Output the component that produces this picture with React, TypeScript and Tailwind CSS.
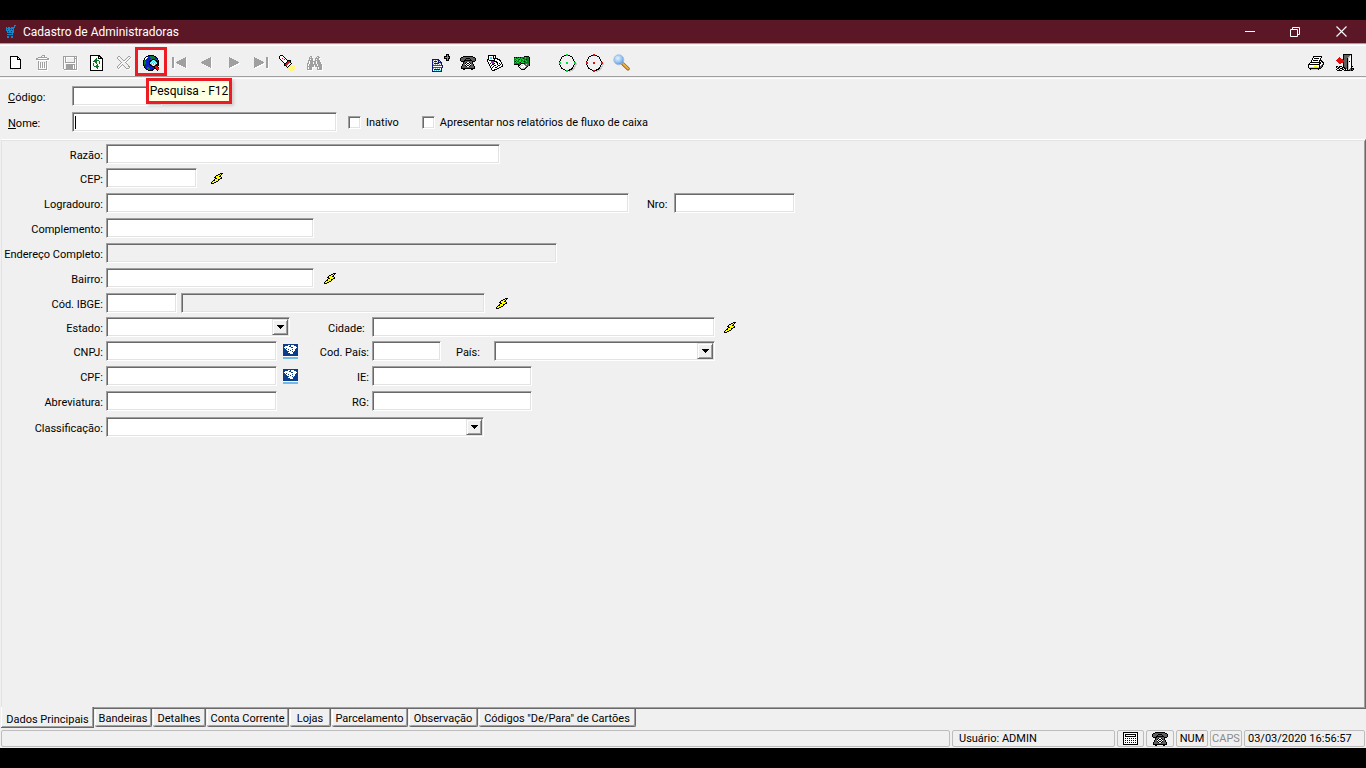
import React from "react";

const PALETTE: Record<string, string> = {
  k: "#000000",
  w: "#ffffff",
  g: "#a0a0a0",
  d: "#5f5f5f",
  l: "#c8c8c8",
  G: "#0a7a1e",
  L: "#00e030",
  B: "#0a1fc8",
  C: "#35d6e6",
  R: "#e01010",
  Y: "#ffff00",
  y: "#fff27a",
  P: "#a020c0",
  N: "#10186e",
  n: "#0a3d8c",
  s: "#6fbbe6",
  c: "#1786c6",
};

/* Draws a small bitmap-style icon, one character per pixel. */
function Pix({ rows, shadow = false }: { rows: string[]; shadow?: boolean }) {
  const width = Math.max(...rows.map((r) => r.length));
  const cells: React.ReactElement[] = [];
  rows.forEach((row, y) => {
    let x = 0;
    while (x < row.length) {
      const ch = row[x];
      let end = x + 1;
      while (end < row.length && row[end] === ch) end++;
      if (PALETTE[ch]) {
        cells.push(<rect key={`${x}-${y}`} x={x} y={y} width={end - x} height={1} fill={PALETTE[ch]} />);
      }
      x = end;
    }
  });
  return (
    <svg
      width={width}
      height={rows.length}
      viewBox={`0 0 ${width} ${rows.length}`}
      shapeRendering="crispEdges"
      aria-hidden="true"
      className={shadow ? "shrink-0 drop-shadow-[1px_1px_0_#ffffff]" : "shrink-0"}
    >
      {cells}
    </svg>
  );
}

const NEW_DOC = [
  "kkkkkkkk...",
  "kwwwwwwkk..",
  "kwwwwwwkwk.",
  "kwwwwwwkkkk",
  "kwwwwwwwwwk",
  "kwwwwwwwwwk",
  "kwwwwwwwwwk",
  "kwwwwwwwwwk",
  "kwwwwwwwwwk",
  "kwwwwwwwwwk",
  "kwwwwwwwwwk",
  "kwwwwwwwwwk",
  "kkkkkkkkkkk",
];
const TRASH = [
  "......ggg....",
  ".....g..g....",
  "..ggggggggg..",
  "gg.........gg",
  "ggggggggggggg",
  ".............",
  "..g.......g..",
  "..g.g.g.g.g..",
  "..g.g.g.g.g..",
  "..g.g.g.g.g..",
  "..g.g.g.g.g..",
  "..g.g.g.g.g..",
  "..g.g.g.g.g..",
  "..g.......g..",
  "..ggggggggg..",
];
const SAVE = [
  "gggggggggggggg",
  "g.g........g.g",
  "g.g........ggg",
  "g.g........g.g",
  "g.g........g.g",
  "g.g........g.g",
  "g.gggggggggg.g",
  "g............g",
  "g..ggggggggg.g",
  "g..ggggggg.g.g",
  "g..ggggggg.g.g",
  "g..ggggggg.g.g",
  "g..ggggggg.g.g",
  ".ggggggggggggg",
];
const REFRESH = [
  "kkkkkkkkkk...",
  "kwwwwwwwkkk..",
  "kwwwwwwwkwkk.",
  "kwwwwwGwkkkkk",
  "kwwwwGGwwwwwk",
  "kwwwGGGGGwwwk",
  "kwwGGGGwwGwwk",
  "kwwwwGGwwGwwk",
  "kwwGwwGwwGwwk",
  "kwwGwwwGwwwwk",
  "kwwGwwGGwwwwk",
  "kwwwGGGGGwwwk",
  "kwwwwwGGwwwwk",
  "kwwwwwwGwwwwk",
  "kwwwwwwwwwwwk",
  "kkkkkkkkkkkkk",
];
const CROSS = [
  ".gg........gg.",
  "g..g......g..g",
  "g...g....g..g.",
  ".g...g..g..g..",
  "..g...gg..g...",
  "...g.....g....",
  "....g...g.....",
  "...g.....g....",
  "..g..g....g...",
  ".g..g.g....g..",
  "g..g...g...gg.",
  "g.g.....g...g.",
  ".g.......ggg..",
];
const GLOBE = [
  ".....kkkkkk.....",
  "...kkBBGGGGkk...",
  "..kwwBBGGGGGBk..",
  ".kwwBBBBGGGGBBk.",
  ".kwBBBBGGkkkGGk.",
  "kGBBBBBkkCwCkkGk",
  "kGGBBBkkCwCwCkkk",
  "kGGBBBkCwCwCwCkk",
  "kGGBBBkwCwCwCwkk",
  "kGBBBBkkCwCwCkkk",
  "kBBBBBBkkCwCkkBk",
  ".kBBBBBBBkkkRRk.",
  ".kBBGGBBBBBkRRRk",
  "..kBGGGBBBBkkRRR",
  "...kkGGBBkk..kRR",
  ".....kkkkk....k.",
];
const FIRST = [
  "gg...........g",
  "gg.........ggg",
  "gg.......ggggg",
  "gg.....ggggggg",
  "gg...ggggggggg",
  "gg..gggggggggg",
  "gg...ggggggggg",
  "gg.....ggggggg",
  "gg.......ggggg",
  "gg.........ggg",
  "gg...........g",
];
const PREV = [
  ".........g",
  ".......ggg",
  ".....ggggg",
  "...ggggggg",
  ".ggggggggg",
  "gggggggggg",
  ".ggggggggg",
  "...ggggggg",
  ".....ggggg",
  ".......ggg",
  ".........g",
];
const mirror = (rows: string[]) => rows.map((r) => r.split("").reverse().join(""));
const TORCH = [
  ".kkk.............",
  "kwwwk............",
  "kwwwwk...........",
  "kwwRwwk..........",
  ".kwwwRwk.........",
  "..kwwwwwkkkk.....",
  "...kwwwwkRRk.....",
  "....kwwkRRdk.....",
  ".....kkRRdwwk....",
  ".....kRRdwwk.....",
  ".....kkdwwk.y.y..",
  ".......kwk.y.y.y.",
  "........k.y.y.y..",
  ".........y.y.y.y.",
  "..........y.y.y..",
  "...........y.y...",
];
const BINOCULARS = [
  "...gg.....gg...",
  "..g.g....g.gg..",
  "..gggg..gggg...",
  "..g.gg..g.gg...",
  ".ggggg..ggggg..",
  ".g.gggggg.ggg..",
  ".g.ggg.gg.gggg.",
  "gg.ggg.gg.gggg.",
  "g.gggggggg.gggg",
  "g.ggggg.gg.gggg",
  "ggggggg.ggggggg",
  "g.ggg.....g.ggg",
  "g.ggg.....g.ggg",
  "ggggg.....ggggg",
];
const DOC_PLUS = [
  "..............kkk.",
  "..............kLk.",
  "............kkkLkk",
  "............kLLLLk",
  "............kkkLkk",
  "NNNNNNN.......kLk.",
  "NCwCwCNN......kkk.",
  "NwNNNwNCN.........",
  "NCwCwCNNNN........",
  "NwNNNNNwCN........",
  "NCwCwCwCwN........",
  "NRRRRRRRRRN.......",
  "NwwwwwwwwwN.......",
  "NRRRRRRRRRN.......",
  "NCwCwCwCwN........",
  "NwNNNNNNwN........",
  "NwCwCwCwCN........",
  "NNNNNNNNNN........",
];
const PHONE = [
  "...kkkkkkkkkk...",
  ".kkddddddddddkk.",
  "kdddddkkkkdddddk",
  "kddddkddddkddddk",
  "kdddkkkkkkkkdddk",
  ".kkkkdddddddkkk.",
  "...kddkwwkddk...",
  "...kdkwkkwkdk...",
  "..kddwkwwkwddk..",
  "..kddkwkkwkddk..",
  ".kddddkwwkddddk.",
  ".kddddddddddddk.",
  ".kkkkkkkkkkkkkk.",
  "...kk......kk...",
];
const PAPERS = [
  ".kkkkkkkk.......",
  ".kwwwwkwk.......",
  ".kwCCwkwk.......",
  ".kwCCwkkkkk.....",
  "kkwwwwwkwwkkk...",
  "kwkkkkkkwwwwkk..",
  "kwwwPPPkkkwwwk..",
  ".kwwPPPwwkkwwwk.",
  ".kwkwPPkwwkwkwk.",
  "..kwwkkwwwkwwkwk",
  "..kwkwwkkwwkkwwk",
  "...kwwkwwwkwwwkk",
  "...kwkwwkkwwkk..",
  "....kwwwwwkk....",
  "....kwwkkk......",
  ".....kkk........",
];
const MONEY = [
  "..........kkkkk.",
  "kGkGkGkGGGGLGGGk",
  "GLGGLLGLGkGLGGGk",
  "GGLLGkLGLLGGkGGk",
  "GLGLGLLGGLGLGGGk",
  "GkLGGLLGLGkGLGGk",
  "GLGLLGkLLLGGGGGk",
  "GGGGGGGkkkkdddGk",
  "kkkkkGkwwwddlddk",
  "....kkwllwwddddk",
  "....kwlwwwwwdk..",
  ".....klwwlwdk...",
  "......kllldk....",
  ".......kkkk.....",
];
const target = (c: string) =>
  [
    ".......TT.........",
    ".....kkTTkk.......",
    "...kk......kk.....",
    "..k..........k....",
    "..k..........k....",
    ".k............k...",
    ".k............k...",
    "k..............k..",
    "TT.....TT......TT.",
    "TT.....TT......TTl",
    "k..............kll",
    ".k............k.l.",
    ".k............kll.",
    "..k..........kll..",
    "..kk........kkll..",
    "....kk....kkkll...",
    "......kTTkklll....",
    ".......TT.ll......",
  ].map((r) => r.replace(/T/g, c));
const PRINTER = [
  ".....kkkkkkkkk..",
  ".....kwwwwwwwk..",
  "....kwkkkkkwk...",
  "....kwwwwwwwk...",
  "...kwkkkkkwkkk..",
  "...kwwwwwwwkwkk.",
  "..kkkkkkkkkkkwkk",
  ".kwwwwwwwwwkkwwk",
  "kkkkkkkkkkkkwwdk",
  "kwwwwwwwwwwkwdk.",
  "kwwwwwYYYwwkddk.",
  "kllllllllllkdk..",
  ".kkkkkkkkkkkk...",
  "..klllllllk.....",
];
const EXIT_DOOR = [
  ".......kkkkkkkkk..",
  ".......kddddddlk..",
  ".......kdddddlwk..",
  "...R...kddddllwk..",
  "..RRR..kdddklwwk..",
  ".RRRRRRkdddklwwk..",
  "RRRRRRRRdddklwwk..",
  ".RRRRRRRdddklkwk..",
  "..RRRRRkdddklwwk..",
  "...RR..kdddklwwk..",
  ".......kdddklwwk..",
  ".......kdddklwwk..",
  "kk.kkk.kdddklwwkk.",
  "k.kk..kkkddklwwk..",
  ".kk.kkk.kkdklwdkkk",
  "k..k..kk.k.klddkdk",
  ".kkkkk..kkkkkkdkk.",
];
const BOLT = [
  ".........kkk",
  ".......kkYk.",
  ".....kkYYk..",
  "....kYYYkk..",
  "...kkYYYYYk.",
  "....kkYYYkk.",
  "...kYYYkk...",
  "..kkYYYk....",
  ".kYYYkk.....",
  "kYYkk.......",
  "kkk.........",
];
const RECEITA = [
  "nnnnnnnnnnnnnnn",
  "nnnnnwwnwwwnnnn",
  "nnwwwwnnwwwwwnn",
  "nwwwwwwwnnwwwwn",
  "nnwnwwwwwwwwwnn",
  "nnnwwnwwwnwwnnn",
  "nnnnwwwnwwwwnnn",
  "nnnnnnwwwnwnnnn",
  "nnnnnwwwwwnnnnn",
  "nnnnnnnwwwnnnnn",
  "nnnnnnnnnnnnnnn",
  "nnnnnnnnnnnnnnn",
  "wwwwwwwwwwwwwww",
  "sssssssssssssss",
  "sssssssssssssss",
];
const CALCULATOR = [
  "kkkkkkkkkkkkkkk",
  "kwwwwwwwwwwwwwk",
  "kwkkkkkkkkkkkwk",
  "kwkwwwwwwwwwkwk",
  "kwkkkkkkkkkkkwk",
  "kwwwwwwwwwwwwwk",
  "kwkwkwkwkwkwkwk",
  "kwwwwwwwwwwwwwk",
  "kwkwkwkwkwkwkwk",
  "kwwwwwwwwwwwwwk",
  "kwkwkwkwkwkwkwk",
  "kwwwwwwwwwwwwwk",
  "kkkkkkkkkkkkkkk",
];
const CART = [
  "........cc",
  "........c.",
  "c.cc.cccc.",
  "cccccccc..",
  "c.cc.c.c..",
  "cccccccc..",
  ".c.cc.cc..",
  ".ccccccc..",
  "......c...",
  ".cccccc...",
  "..........",
  ".cc..cc...",
  ".cc..cc...",
];

function Magnifier() {
  return (
    <svg width="17" height="17" viewBox="0 0 17 17" aria-hidden="true">
      <defs>
        <radialGradient id="lens" cx="0.4" cy="0.35" r="0.7">
          <stop offset="0" stopColor="#e6f3ff" />
          <stop offset="0.6" stopColor="#8fc1f2" />
          <stop offset="1" stopColor="#4f86cf" />
        </radialGradient>
      </defs>
      <path d="M9.5 9.5 L15 14.8" stroke="#8a5a1a" strokeWidth="3.4" strokeLinecap="round" />
      <path d="M10.3 10 L15 14.6" stroke="#f0b040" strokeWidth="2" strokeLinecap="round" />
      <circle cx="5.8" cy="5.8" r="5" fill="url(#lens)" stroke="#a9bfdd" strokeWidth="1" />
    </svg>
  );
}

function ToolButton({
  label,
  children,
  disabled = false,
}: {
  label: string;
  children: React.ReactNode;
  disabled?: boolean;
}) {
  return (
    <button
      type="button"
      aria-label={label}
      disabled={disabled}
      className="relative flex h-[29px] w-[27px] shrink-0 items-center justify-center pt-0.5"
    >
      {children}
    </button>
  );
}

const SUNKEN =
  "block h-5 shrink-0 rounded-none border border-t-[#a0a0a0] border-l-[#a0a0a0] border-r-white border-b-white px-1 outline-none shadow-[inset_1px_1px_0_#696969,inset_-1px_-1px_0_#e3e3e3]";

function Field({ id, width, readOnly = false }: { id: string; width: string; readOnly?: boolean }) {
  return (
    <input
      id={id}
      type="text"
      readOnly={readOnly}
      className={`${SUNKEN} ${width} ${readOnly ? "bg-[#f0f0f0]" : "bg-white"}`}
    />
  );
}

function Combo({ id, width }: { id: string; width: string }) {
  return (
    <div className={`relative shrink-0 ${width}`}>
      <select id={id} className={`${SUNKEN} w-full appearance-none bg-white`}>
        <option value=""></option>
      </select>
      <span className="pointer-events-none absolute top-0.5 right-0.5 flex h-4 w-4 items-center justify-center border border-t-[#e3e3e3] border-l-[#e3e3e3] border-r-[#696969] border-b-[#696969] bg-[#f0f0f0] shadow-[inset_1px_1px_0_#ffffff,inset_-1px_-1px_0_#a0a0a0]">
        <Pix rows={["kkkkkkk", ".kkkkk.", "..kkk..", "...k..."]} />
      </span>
    </div>
  );
}

function Label({
  id,
  children,
  className = "w-[104px] pr-[3px] text-right",
}: {
  id: string;
  children: React.ReactNode;
  className?: string;
}) {
  return (
    <label htmlFor={id} className={`shrink-0 pt-0.5 whitespace-nowrap ${className}`}>
      {children}
    </label>
  );
}

function Bolt({ label, className }: { label: string; className: string }) {
  return (
    <button type="button" aria-label={label} className={`shrink-0 ${className}`}>
      <Pix rows={BOLT} />
    </button>
  );
}

function Row({ children }: { children: React.ReactNode }) {
  return <div className="flex h-5 items-center">{children}</div>;
}

function Check({ id, children }: { id: string; children: React.ReactNode }) {
  return (
    <div className="flex items-center gap-[5px]">
      <input
        id={id}
        type="checkbox"
        className="h-[13px] w-[13px] appearance-none border border-t-[#a0a0a0] border-l-[#a0a0a0] border-r-white border-b-white bg-white shadow-[inset_1px_1px_0_#696969,inset_-1px_-1px_0_#e3e3e3]"
      />
      <label htmlFor={id}>{children}</label>
    </div>
  );
}

const TABS: { name: string; width: string }[] = [
  { name: "Bandeiras", width: "w-[57px]" },
  { name: "Detalhes", width: "w-[53px]" },
  { name: "Conta Corrente", width: "w-[82px]" },
  { name: "Lojas", width: "w-[41px]" },
  { name: "Parcelamento", width: "w-[76px]" },
  { name: "Observação", width: "w-[69px]" },
  { name: 'Códigos "De/Para" de Cartões', width: "w-[157px]" },
];

const CELL = "flex h-[17px] items-center rounded-xs border border-[#bdbdbd] whitespace-nowrap";

export default function App() {
  return (
    <div className="flex min-h-screen flex-col bg-black py-5">
      <div className="flex flex-1 flex-col bg-[#f0f0f0] font-['Roboto','Liberation_Sans',sans-serif] text-[11px] leading-[13px] text-black">
        <header className="flex h-[23px] items-center bg-[#5c1727] pr-0.5 pl-[6px] text-white">
          <Pix rows={CART} />
          <h1 className="ml-[7px] flex-1 text-[12px] leading-4">Cadastro de Administradoras</h1>
          <button type="button" aria-label="Minimizar" className="flex h-full w-[45px] items-center justify-center">
            <svg width="10" height="10" viewBox="0 0 10 10" shapeRendering="crispEdges" aria-hidden="true">
              <rect x="0" y="4" width="10" height="1" fill="#fff" />
            </svg>
          </button>
          <button type="button" aria-label="Restaurar" className="flex h-full w-[46px] items-center justify-center">
            <svg width="10" height="10" viewBox="0 0 10 10" fill="none" stroke="#fff" aria-hidden="true">
              <path d="M0.5 2.5h7v7h-7z M2.5 2.5v-2h7v7h-2" />
            </svg>
          </button>
          <button type="button" aria-label="Fechar" className="flex h-full w-[46px] items-center justify-center">
            <svg width="11" height="11" viewBox="0 0 11 11" stroke="#fff" strokeWidth="1.1" aria-hidden="true">
              <path d="M0.5 0.5l10 10M10.5 0.5l-10 10" />
            </svg>
          </button>
        </header>

        <div className="border-y border-[#a0a0a0] pt-px">
          <div role="toolbar" className="flex border-t border-white pt-px pr-2 pl-0.5">
            <div className="flex gap-px">
              <div className="flex">
                <ToolButton label="Novo"><Pix rows={NEW_DOC} /></ToolButton>
                <ToolButton label="Excluir" disabled><Pix rows={TRASH} shadow /></ToolButton>
                <ToolButton label="Salvar" disabled><Pix rows={SAVE} shadow /></ToolButton>
                <ToolButton label="Atualizar"><Pix rows={REFRESH} /></ToolButton>
                <ToolButton label="Cancelar" disabled><Pix rows={CROSS} shadow /></ToolButton>
                <ToolButton label="Pesquisa">
                  <Pix rows={GLOBE} />
                  <span className="absolute top-0 -left-0.5 h-[29px] w-8 border-3 border-[#ed1c24]" />
                  <span
                    role="tooltip"
                    className="absolute top-[31px] left-[9px] z-10 flex h-[26px] w-[86px] items-center justify-center border-3 border-[#ed1c24] bg-[#ffffe1] text-[12px] leading-4 whitespace-nowrap shadow-[2px_2px_3px_rgba(0,0,0,0.15)]"
                  >
                    Pesquisa - F12
                  </span>
                </ToolButton>
              </div>
              <div className="flex">
                <ToolButton label="Primeiro" disabled><Pix rows={FIRST} shadow /></ToolButton>
                <ToolButton label="Anterior" disabled><Pix rows={PREV} shadow /></ToolButton>
              </div>
              <div className="flex">
                <ToolButton label="Próximo" disabled><Pix rows={mirror(PREV)} shadow /></ToolButton>
                <ToolButton label="Último" disabled><Pix rows={mirror(FIRST)} shadow /></ToolButton>
                <ToolButton label="Localizar"><Pix rows={TORCH} /></ToolButton>
                <ToolButton label="Consultar" disabled><Pix rows={BINOCULARS} shadow /></ToolButton>
              </div>
            </div>
            <div className="ml-[99px] flex">
              <ToolButton label="Adicionar documento"><Pix rows={DOC_PLUS} /></ToolButton>
              <ToolButton label="Telefones"><Pix rows={PHONE} /></ToolButton>
              <ToolButton label="Documentos"><Pix rows={PAPERS} /></ToolButton>
              <ToolButton label="Financeiro"><Pix rows={MONEY} /></ToolButton>
            </div>
            <div className="ml-[19px] flex flex-1">
              <ToolButton label="Ativar"><Pix rows={target("L")} /></ToolButton>
              <ToolButton label="Desativar"><Pix rows={target("R")} /></ToolButton>
              <ToolButton label="Visualizar"><Magnifier /></ToolButton>
            </div>
            <div className="flex gap-0.5">
              <ToolButton label="Imprimir"><Pix rows={PRINTER} /></ToolButton>
              <ToolButton label="Sair"><Pix rows={EXIT_DOOR} /></ToolButton>
            </div>
          </div>
        </div>

        <section className="mt-px flex flex-col gap-1.5 border-t border-white pt-[7px] pb-[7px] pl-2">
          <Row>
            <Label id="codigo" className="w-16"><u>C</u>ódigo:</Label>
            <Field id="codigo" width="w-[90px]" />
          </Row>
          <Row>
            <Label id="nome" className="w-16"><u>N</u>ome:</Label>
            <div className="relative">
              <Field id="nome" width="w-[265px]" />
              <span className="absolute top-1 left-[3px] h-[13px] w-px bg-black" />
            </div>
            <div className="ml-[11px] flex gap-[23px]">
              <Check id="inativo">Inativo</Check>
              <Check id="fluxo">Apresentar nos relatórios de fluxo de caixa</Check>
            </div>
          </Row>
        </section>

        <main className="ml-px flex flex-1 flex-col border-t border-r border-b border-t-white border-r-[#696969] border-b-[#696969] shadow-[inset_1px_1px_0_#e3e3e3,inset_-1px_-1px_0_#a0a0a0]">
          <form className="flex flex-col gap-1 pt-1 pl-px">
            <Row>
              <Label id="razao">Razão:</Label>
              <Field id="razao" width="w-[394px]" />
            </Row>
            <div className="flex flex-col gap-[5px]">
              <Row>
                <Label id="cep">CEP:</Label>
                <Field id="cep" width="w-[91px]" />
                <Bolt label="Buscar CEP" className="ml-[14px]" />
              </Row>
              <Row>
                <Label id="logradouro">Logradouro:</Label>
                <Field id="logradouro" width="w-[523px]" />
                <Label id="nro" className="ml-[18px] w-[27px]">Nro:</Label>
                <Field id="nro" width="w-[121px]" />
              </Row>
              <Row>
                <Label id="complemento">Complemento:</Label>
                <Field id="complemento" width="w-[208px]" />
              </Row>
              <Row>
                <Label id="endereco">Endereço Completo:</Label>
                <Field id="endereco" width="w-[451px]" readOnly />
              </Row>
              <Row>
                <Label id="bairro">Bairro:</Label>
                <Field id="bairro" width="w-[208px]" />
                <Bolt label="Buscar bairro" className="ml-[10px]" />
              </Row>
              <Row>
                <Label id="ibge">Cód. IBGE:</Label>
                <Field id="ibge" width="w-[71px]" />
                <label className="ml-1" aria-label="Município">
                  <Field id="municipio" width="w-[304px]" readOnly />
                </label>
                <Bolt label="Buscar município" className="ml-[11px]" />
              </Row>
            </div>
            <Row>
              <Label id="estado">Estado:</Label>
              <Combo id="estado" width="w-[184px]" />
              <Label id="cidade" className="ml-[38px] w-11">Cidade:</Label>
              <Field id="cidade" width="w-[343px]" />
              <Bolt label="Buscar cidade" className="ml-[9px]" />
            </Row>
            <div className="flex flex-col gap-[5px]">
              <Row>
                <Label id="cnpj">CNPJ:</Label>
                <Field id="cnpj" width="w-[171px]" />
                <button type="button" aria-label="Consultar CNPJ" className="ml-[6px] w-[15px]"><Pix rows={RECEITA} /></button>
                <Label id="codpais" className="w-[74px] pr-[3px] text-right">Cod. País:</Label>
                <Field id="codpais" width="w-[69px]" />
                <Label id="pais" className="ml-[15px] w-[38px]">País:</Label>
                <Combo id="pais" width="w-[221px]" />
              </Row>
              <Row>
                <Label id="cpf">CPF:</Label>
                <Field id="cpf" width="w-[171px]" />
                <button type="button" aria-label="Consultar CPF" className="ml-[6px] w-[15px]"><Pix rows={RECEITA} /></button>
                <Label id="ie" className="w-[74px] pr-[3px] text-right">IE:</Label>
                <Field id="ie" width="w-[160px]" />
              </Row>
              <Row>
                <Label id="abreviatura">Abreviatura:</Label>
                <Field id="abreviatura" width="w-[171px]" />
                <Label id="rg" className="w-[95px] pr-[3px] text-right">RG:</Label>
                <Field id="rg" width="w-[160px]" />
              </Row>
            </div>
            <div className="mt-0.5">
              <Row>
                <Label id="classificacao">Classificação:</Label>
                <Combo id="classificacao" width="w-[378px]" />
              </Row>
            </div>
          </form>
        </main>

        <div role="tablist" className="flex h-[19px] items-start gap-px pl-px">
          <button
            type="button"
            role="tab"
            aria-selected="true"
            className="relative z-10 -mt-0.5 h-[21px] w-[93px] border-r border-b border-[#696969] bg-[#f0f0f0] pt-1 pl-px text-center whitespace-nowrap shadow-[inset_1px_0_0_#ffffff,inset_-1px_-1px_0_#a0a0a0]"
          >
            Dados Principais
          </button>
          {TABS.map((t) => (
            <button
              key={t.name}
              type="button"
              role="tab"
              aria-selected="false"
              className={`h-[18px] rounded-b-xs border-r border-b border-[#696969] pt-px text-center whitespace-nowrap shadow-[inset_1px_0_0_#ffffff,inset_-1px_-1px_0_#a0a0a0] ${t.width}`}
            >
              {t.name}
            </button>
          ))}
        </div>

        <footer className="mt-0.5 mb-px flex gap-0.5 px-px">
          <div className={`${CELL} flex-1`} />
          <div className={`${CELL} w-[163px] pl-[6px]`}>Usuário: ADMIN</div>
          <button type="button" aria-label="Calculadora" className={`${CELL} w-[27px] justify-center`}><Pix rows={CALCULATOR} /></button>
          <button type="button" aria-label="Agenda" className={`${CELL} w-[28px] justify-center`}><Pix rows={PHONE} /></button>
          <div className={`${CELL} w-8 justify-center`}>NUM</div>
          <div className={`${CELL} w-8 justify-center text-[#8a8a8a]`}>CAPS</div>
          <div className={`${CELL} w-[121px] pl-[3px]`}>03/03/2020 16:56:57</div>
        </footer>
      </div>
    </div>
  );
}
